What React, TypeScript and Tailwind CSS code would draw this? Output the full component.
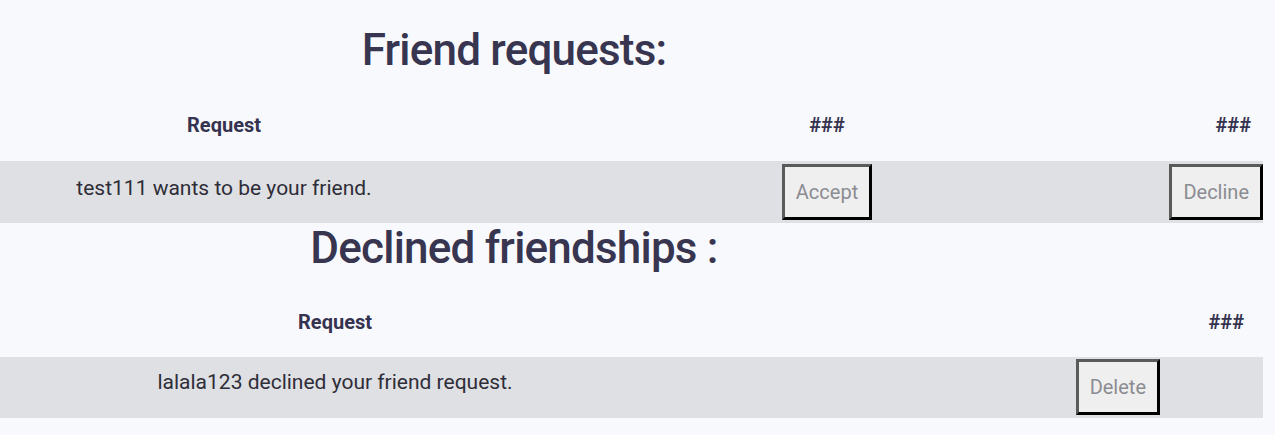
const btn =
  "h-[56px] px-[11px] bg-[#efefef] text-[20px] leading-[30px] text-[#8b8c92] border-[3px] border-solid border-t-[#5a5a5a] border-l-[#5a5a5a] border-r-black border-b-black";

function Heading({ children }: { children: string }) {
  return (
    <h1 className="w-[1028px] text-center text-[44px] font-medium leading-[1.172] tracking-[-0.8px] text-[#37354f]">
      {children}
    </h1>
  );
}

export default function App() {
  return (
    <div className="min-h-screen bg-[#f8f9fd] font-['Roboto',sans-serif] pt-[25px]">
      <Heading>Friend requests:</Heading>

      <div className="w-[1263px]">
        <div className="flex pt-[33px] pb-[21px] text-[20px] font-bold leading-[30px] text-[#35334f]">
          <div className="w-[448px] text-center">Request</div>
          <div className="w-[722px] pl-[36px] text-center">###</div>
          <div className="w-[93px] pr-[12px] text-right">###</div>
        </div>
        <div className="flex h-[62px] bg-[#dfe0e4]">
          <div className="w-[448px] pt-[12px] text-center text-[21px] leading-[30px] text-[#2e2d38]">
            test111 wants to be your friend.
          </div>
          <div className="flex w-[722px] items-center justify-center pl-[36px]">
            <button className={btn}>Accept</button>
          </div>
          <div className="flex w-[93px] items-center justify-end">
            <button className={btn}>Decline</button>
          </div>
        </div>
      </div>

      <Heading>Declined friendships :</Heading>

      <div className="w-[1263px]">
        <div className="flex pt-[33px] pb-[20px] text-[20px] font-bold leading-[30px] text-[#35334f]">
          <div className="w-[670px] text-center">Request</div>
          <div className="flex-1 pr-[19px] text-right">###</div>
        </div>
        <div className="flex h-[61px] bg-[#dfe0e4]">
          <div className="w-[670px] pt-[10px] text-center text-[21px] leading-[30px] text-[#2e2d38]">
            lalala123 declined your friend request.
          </div>
          <div className="flex flex-1 items-start justify-end pt-[2px] pr-[103px]">
            <button className={btn}>Delete</button>
          </div>
        </div>
      </div>
    </div>
  );
}
